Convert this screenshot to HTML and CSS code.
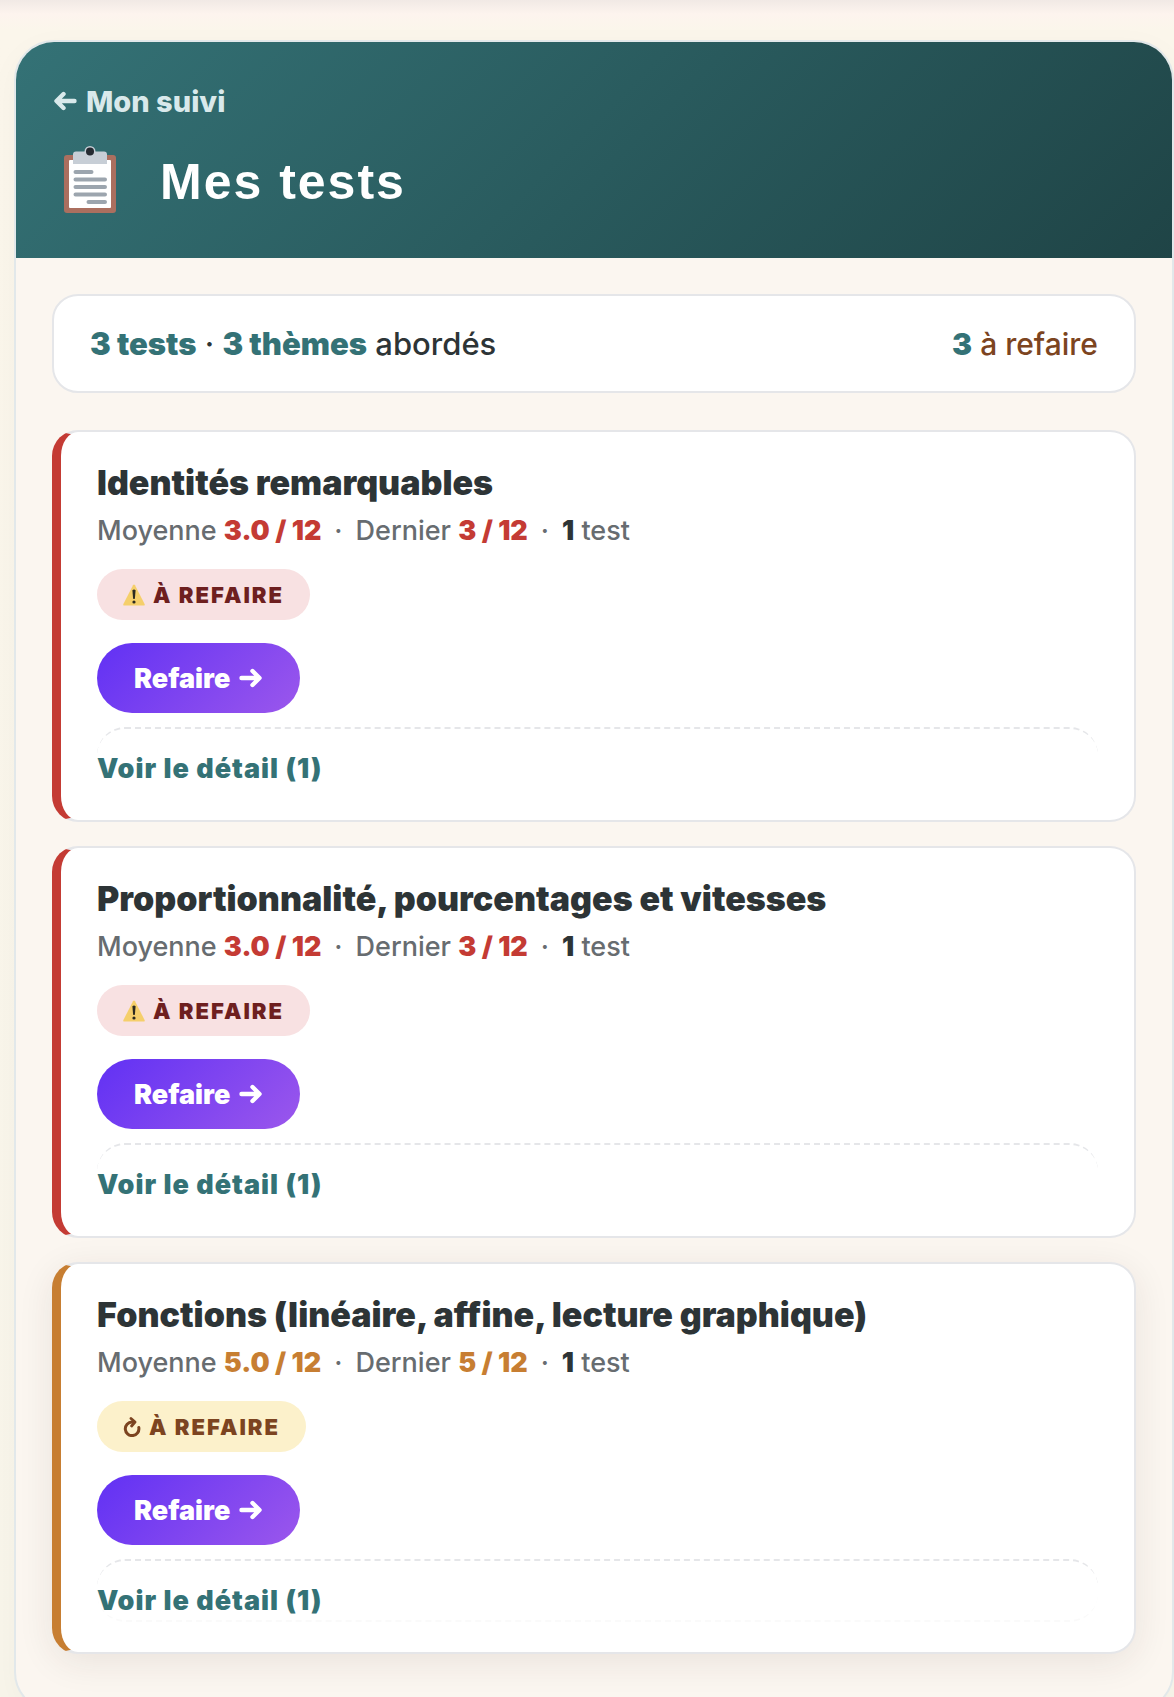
FILE: index.html
```html
<!DOCTYPE html>
<html lang="fr">
<head>
<meta charset="utf-8">
<meta name="viewport" content="width=device-width, initial-scale=1">
<title>Mes tests</title>
<link rel="stylesheet" href="styles.css">
</head>
<body>
<svg class="sprite" aria-hidden="true">
  <symbol id="arrow" viewBox="0 0 24 20"><path d="M2.5 10H20M13.5 3L20.5 10L13.5 17" fill="none" stroke="currentColor" stroke-width="4.400" stroke-linecap="round" stroke-linejoin="round"/></symbol>
  <symbol id="warning" viewBox="0 0 22 22"><path d="M10 1.2Q11 -.4 12 1.2L21.6 20Q22.2 21.6 20.6 21.6H1.4Q-.2 21.6.4 20Z" fill="#f5cf6b"/><path d="M9.4 6.2Q11 4.8 12.6 6.2L11.9 14.6Q11 15.6 10.1 14.6Z" fill="#2b2a20"/><circle cx="11" cy="18" r="1.6" fill="#2b2a20"/></symbol>
  <symbol id="redo" viewBox="0 0 18 20"><path d="M15.800 10.600A6.800 6.800 0 1 1 9 5H11" fill="none" stroke="currentColor" stroke-width="3" stroke-linecap="round"/><path d="M8 1.500L12 5L8.600 9" fill="none" stroke="currentColor" stroke-width="2.800" stroke-linecap="round" stroke-linejoin="round"/></symbol>
</svg>
<main class="panel">
  <header class="hero">
    <a class="back" href="#"><svg class="arrow arrow-back" aria-hidden="true"><use href="#arrow"/></svg>Mon suivi</a>
    <div class="heading">
      <svg class="clipboard" viewBox="0 0 52 68" aria-hidden="true">
        <rect y="9" width="52" height="58" rx="3" fill="#ab6f5f"/>
        <rect x="5" y="14" width="42" height="48" rx="1" fill="#fff"/>
        <path d="M9 18V8.500Q9 5.500 12 5.500H20.500A5.500 5.500 0 0 1 31.500 5.500H40Q43 5.500 43 8.500V18Z" fill="#c7ced6"/>
        <circle cx="26" cy="5.500" r="4" fill="#252a31"/>
        <path d="M11.500 26H27.500M11.500 33.500H41M11.500 41H41M11.500 48.500H41M24.500 56H41" stroke="#9ca5ae" stroke-width="4" stroke-linecap="round"/>
      </svg>
      <h1 class="title">Mes tests</h1>
    </div>
  </header>
  <div class="content">
    <section class="summary">
      <p><strong>3 tests</strong> · <strong>3 thèmes</strong> abordés</p>
      <p class="todo"><strong>3</strong> à refaire</p>
    </section>
    <div class="list">
      <article class="card card-bad">
        <h2 class="name">Identités remarquables</h2>
        <p class="meta">Moyenne <b class="score">3.0 / 12</b><span class="dot">·</span>Dernier <b class="score">3 / 12</b><span class="dot">·</span><b>1</b> test</p>
        <span class="badge"><svg class="warning" aria-hidden="true"><use href="#warning"/></svg>À REFAIRE</span>
        <button class="redo" type="button">Refaire <svg class="arrow" aria-hidden="true"><use href="#arrow"/></svg></button>
        <details class="detail"><summary>Voir le détail (1)</summary></details>
      </article>
      <article class="card card-bad">
        <h2 class="name">Proportionnalité, pourcentages et vitesses</h2>
        <p class="meta">Moyenne <b class="score">3.0 / 12</b><span class="dot">·</span>Dernier <b class="score">3 / 12</b><span class="dot">·</span><b>1</b> test</p>
        <span class="badge"><svg class="warning" aria-hidden="true"><use href="#warning"/></svg>À REFAIRE</span>
        <button class="redo" type="button">Refaire <svg class="arrow" aria-hidden="true"><use href="#arrow"/></svg></button>
        <details class="detail"><summary>Voir le détail (1)</summary></details>
      </article>
      <article class="card card-mid card-active">
        <h2 class="name">Fonctions (linéaire, affine, lecture graphique)</h2>
        <p class="meta">Moyenne <b class="score">5.0 / 12</b><span class="dot">·</span>Dernier <b class="score">5 / 12</b><span class="dot">·</span><b>1</b> test</p>
        <span class="badge"><svg class="again" aria-hidden="true"><use href="#redo"/></svg>À REFAIRE</span>
        <button class="redo" type="button">Refaire <svg class="arrow" aria-hidden="true"><use href="#arrow"/></svg></button>
        <details class="detail"><summary>Voir le détail (1)</summary></details>
      </article>
    </div>
  </div>
</main>
</body>
</html>
```
FILE: styles.css
```css
* { box-sizing: border-box; }
html { height: 100%; overflow: hidden; }
body {
  height: 100%;
  margin: 0;
  overflow: hidden;
  padding: 40px 0 0 14px;
  font-family: Inter, "Liberation Sans", sans-serif;
  color: #2d3436;
  background: linear-gradient(#f1e9e5, #fdf4ee 14px, #fbf6eb 30px, #f8f5ea);
}
h1, h2, p { margin: 0; }
.sprite { display: none; }

.panel {
  border: 2px solid #e2e8ea;
  border-radius: 40px;
  background: #fbf6f0;
  overflow: hidden;
  box-shadow: 0 8px 32px rgba(0, 0, 0, .03);
}
.hero {
  height: 216px;
  padding: 38px 37px 0;
  background: linear-gradient(135deg, #347276, #1f4446);
  color: #fff;
}
.back {
  display: inline-flex;
  align-items: center;
  gap: 9px;
  height: 42px;
  color: #d9e9eb;
  font-size: 29px;
  font-weight: 800;
  text-decoration: none;
}
.arrow { width: 24px; height: 20px; }
.arrow-back { transform: scaleX(-1); }
.heading { display: flex; align-items: center; padding: 24px 11px 0; gap: 44px; }
.clipboard { width: 52px; height: 68px; }
.title {
  padding-top: 4px;
  font-family: "Liberation Sans", Arial, sans-serif;
  font-size: 50px;
  line-height: 64px;
  font-weight: 700;
  letter-spacing: 2px;
}

.content { padding: 36px 36px 56px; }
.summary {
  display: flex;
  justify-content: space-between;
  align-items: center;
  height: 99px;
  padding: 0 36px;
  margin-bottom: 37px;
  border: 2px solid #e5e6e9;
  border-radius: 26px;
  background: #fff;
  font-size: 31px;
  font-weight: 500;
  line-height: 48px;
}
.summary strong { color: #347276; font-weight: 900; }
.summary .todo { color: #7c4420; font-size: 30px; }

.list { display: grid; gap: 24px; }
.card {
  display: flex;
  flex-direction: column;
  align-items: flex-start;
  padding: 32px 36px 30px;
  border: 2px solid #e5e6e9;
  border-left: 9px solid var(--tone);
  border-radius: 26px;
  background: #fff;
}
.card-bad { --tone: #c43b34; --badge: #f8e1e2; --badge-text: #6e1f1f; }
.card-mid { --tone: #c77e32; --badge: #fcf1cb; --badge-text: #7c4420; }
.card-active { box-shadow: 0 8px 36px rgba(60, 30, 30, .09); }
.name { font-size: 34px; line-height: 38px; font-weight: 900; }
.meta { margin-top: 11px; font-size: 27px; font-weight: 450; line-height: 36px; color: #676c70; }
.meta b { font-weight: 900; color: #2d3436; }
.meta .score { color: var(--tone); }
.dot { padding: 0 13px; }
.badge {
  display: flex;
  align-items: center;
  gap: 8px;
  height: 51px;
  margin-top: 20px;
  padding: 0 26px;
  border-radius: 26px;
  background: var(--badge);
  color: var(--badge-text);
  font-size: 22px;
  font-weight: 900;
  letter-spacing: 2px;
}
.warning { width: 22px; height: 22px; }
.again { width: 18px; height: 20px; }
.redo {
  display: flex;
  align-items: center;
  gap: 9px;
  height: 70px;
  margin: 23px 0 14px;
  padding: 0 37px;
  border: 0;
  border-radius: 35px;
  background: linear-gradient(135deg, #6131f4, #9b57ec);
  color: #fff;
  font: 900 27px Inter, "Liberation Sans", sans-serif;
}
.detail {
  width: 100%;
  min-height: 63px;
  border-top: 2px dashed #e5e6e9;
  border-radius: 28px;
}
.card-active .detail { border-bottom: 2px dashed #fafafa; }
.detail summary {
  list-style: none;
  padding-top: 22px;
  color: #347276;
  font-size: 27px;
  line-height: 36px;
  font-weight: 900;
  letter-spacing: 1px;
}
```
